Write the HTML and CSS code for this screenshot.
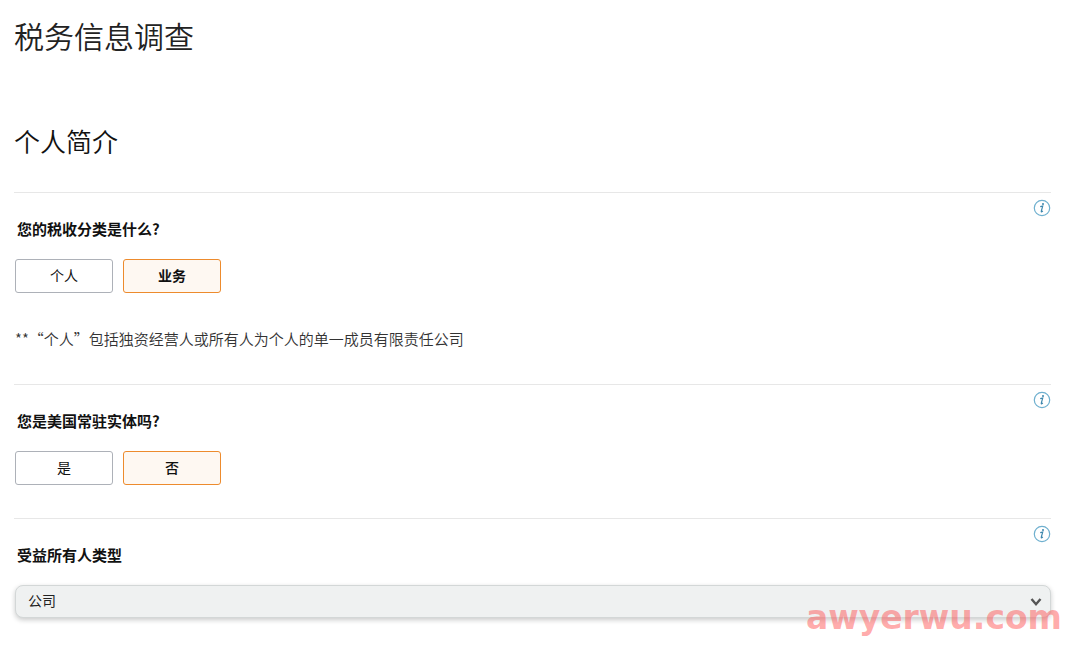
FILE: index.html
```html
<!DOCTYPE html>
<html lang="zh-CN">
<head>
<meta charset="utf-8">
<meta name="viewport" content="width=device-width, initial-scale=1">
<title>税务信息调查</title>
<link rel="stylesheet" href="styles.css">
</head>
<body>
<svg class="sprite" aria-hidden="true">
  <symbol id="info" viewBox="0 0 18 18">
    <circle cx="9" cy="9" r="7.7" fill="none" stroke="#6fb0cf" stroke-width="1.2"/>
    <path d="M7.2 7.7 9.7 7.1 8.3 12.2q-.2.8.5.5l1.1-.7" fill="none" stroke="#3d87ad" stroke-width="1.2"/>
    <circle cx="10" cy="4.9" r="1" fill="#3d87ad"/>
  </symbol>
</svg>
<main class="page">
  <h1 class="title">税务信息调查</h1>
  <form class="survey">
    <h2 class="subtitle">个人简介</h2>
    <section class="question" aria-labelledby="q-class">
      <div class="question-head">
        <h3 class="label" id="q-class">您的税收分类是什么?</h3>
        <button class="help" type="button" aria-label="帮助"><svg class="help-icon"><use href="#info"/></svg></button>
      </div>
      <div class="options">
        <button class="option" type="button" aria-pressed="false">个人</button>
        <button class="option selected strong" type="button" aria-pressed="true">业务</button>
      </div>
      <p class="note">**“个人”包括独资经营人或所有人为个人的单一成员有限责任公司</p>
    </section>
    <section class="question" aria-labelledby="q-resident">
      <div class="question-head">
        <h3 class="label" id="q-resident">您是美国常驻实体吗?</h3>
        <button class="help" type="button" aria-label="帮助"><svg class="help-icon"><use href="#info"/></svg></button>
      </div>
      <div class="options">
        <button class="option" type="button" aria-pressed="false">是</button>
        <button class="option selected medium" type="button" aria-pressed="true">否</button>
      </div>
    </section>
    <section class="question">
      <div class="question-head">
        <label class="label" for="owner-type">受益所有人类型</label>
        <button class="help" type="button" aria-label="帮助"><svg class="help-icon"><use href="#info"/></svg></button>
      </div>
      <div class="select-wrap">
        <select class="select" id="owner-type"><option>公司</option></select>
        <svg class="chevron" viewBox="0 0 12 10" aria-hidden="true"><path d="M1.5 2 6 7.2 10.5 2" fill="none" stroke="#555" stroke-width="2.4"/></svg>
      </div>
    </section>
  </form>
  <div class="watermark">awyerwu.com</div>
</main>
</body>
</html>
```
FILE: styles.css
```css
* {
  box-sizing: border-box;
}

body {
  margin: 0;
  background: #fff;
  color: #111;
  font-family: "Noto Sans CJK SC", "Noto Sans", sans-serif;
  font-size: 15px;
}

.sprite {
  display: none;
}

.page {
  position: relative;
  padding: 15px 29px 0 14px;
}

.title,
.subtitle,
.label,
.note {
  margin: 0;
}

.title {
  color: #222;
  font-size: 30px;
  font-weight: 350;
  line-height: 40px;
}

.subtitle {
  margin: 66px 0 31px;
  font-size: 26px;
  font-weight: 350;
  line-height: 40px;
}

.question {
  border-top: 1px solid #e7e7e7;
  padding-bottom: 33px;
}

.question:last-child {
  padding-bottom: 30px;
}

.question-head {
  display: flex;
  justify-content: space-between;
  align-items: flex-start;
  padding-top: 6px;
}

.label {
  padding: 20px 0 20px 3px;
  font-size: 15px;
  font-weight: 700;
  line-height: 20px;
}

.help {
  display: block;
  border: 0;
  padding: 0;
  background: none;
  cursor: pointer;
}

.help-icon {
  display: block;
  width: 18px;
  height: 18px;
}

.options {
  display: flex;
  gap: 10px;
  padding-left: 1px;
}

.option {
  width: 98px;
  height: 34px;
  border: 1px solid #adb1b8;
  border-radius: 3px;
  padding: 0 0 2px;
  background: #fff;
  color: #111;
  font: inherit;
  font-size: 14px;
  line-height: 20px;
  cursor: pointer;
}

.option.selected {
  border-color: #ed8b2d;
  background: #fef8f2;
}

.option.medium {
  font-weight: 500;
}

.option.strong {
  font-weight: 700;
}

.note {
  padding: 34px 0 0 1px;
  color: #333;
  font-weight: 350;
  line-height: 24px;
}

.select-wrap {
  position: relative;
  padding-left: 1px;
}

.select {
  display: block;
  width: 100%;
  height: 33px;
  appearance: none;
  border: 1px solid #d3d7d7;
  border-radius: 8px;
  padding: 0 32px 3px 12px;
  background: #eff1f1;
  box-shadow: 0 2px 5px rgba(15, 17, 17, .22);
  color: #222;
  font: inherit;
  font-size: 14px;
}

.chevron {
  position: absolute;
  top: 12px;
  right: 9px;
  width: 12px;
  height: 10px;
  pointer-events: none;
}

.watermark {
  position: absolute;
  right: 18px;
  bottom: 10px;
  color: rgba(255, 80, 80, .47);
  font-family: "DejaVu Sans", sans-serif;
  font-size: 33px;
  font-weight: 700;
  line-height: 40px;
  pointer-events: none;
}
```
